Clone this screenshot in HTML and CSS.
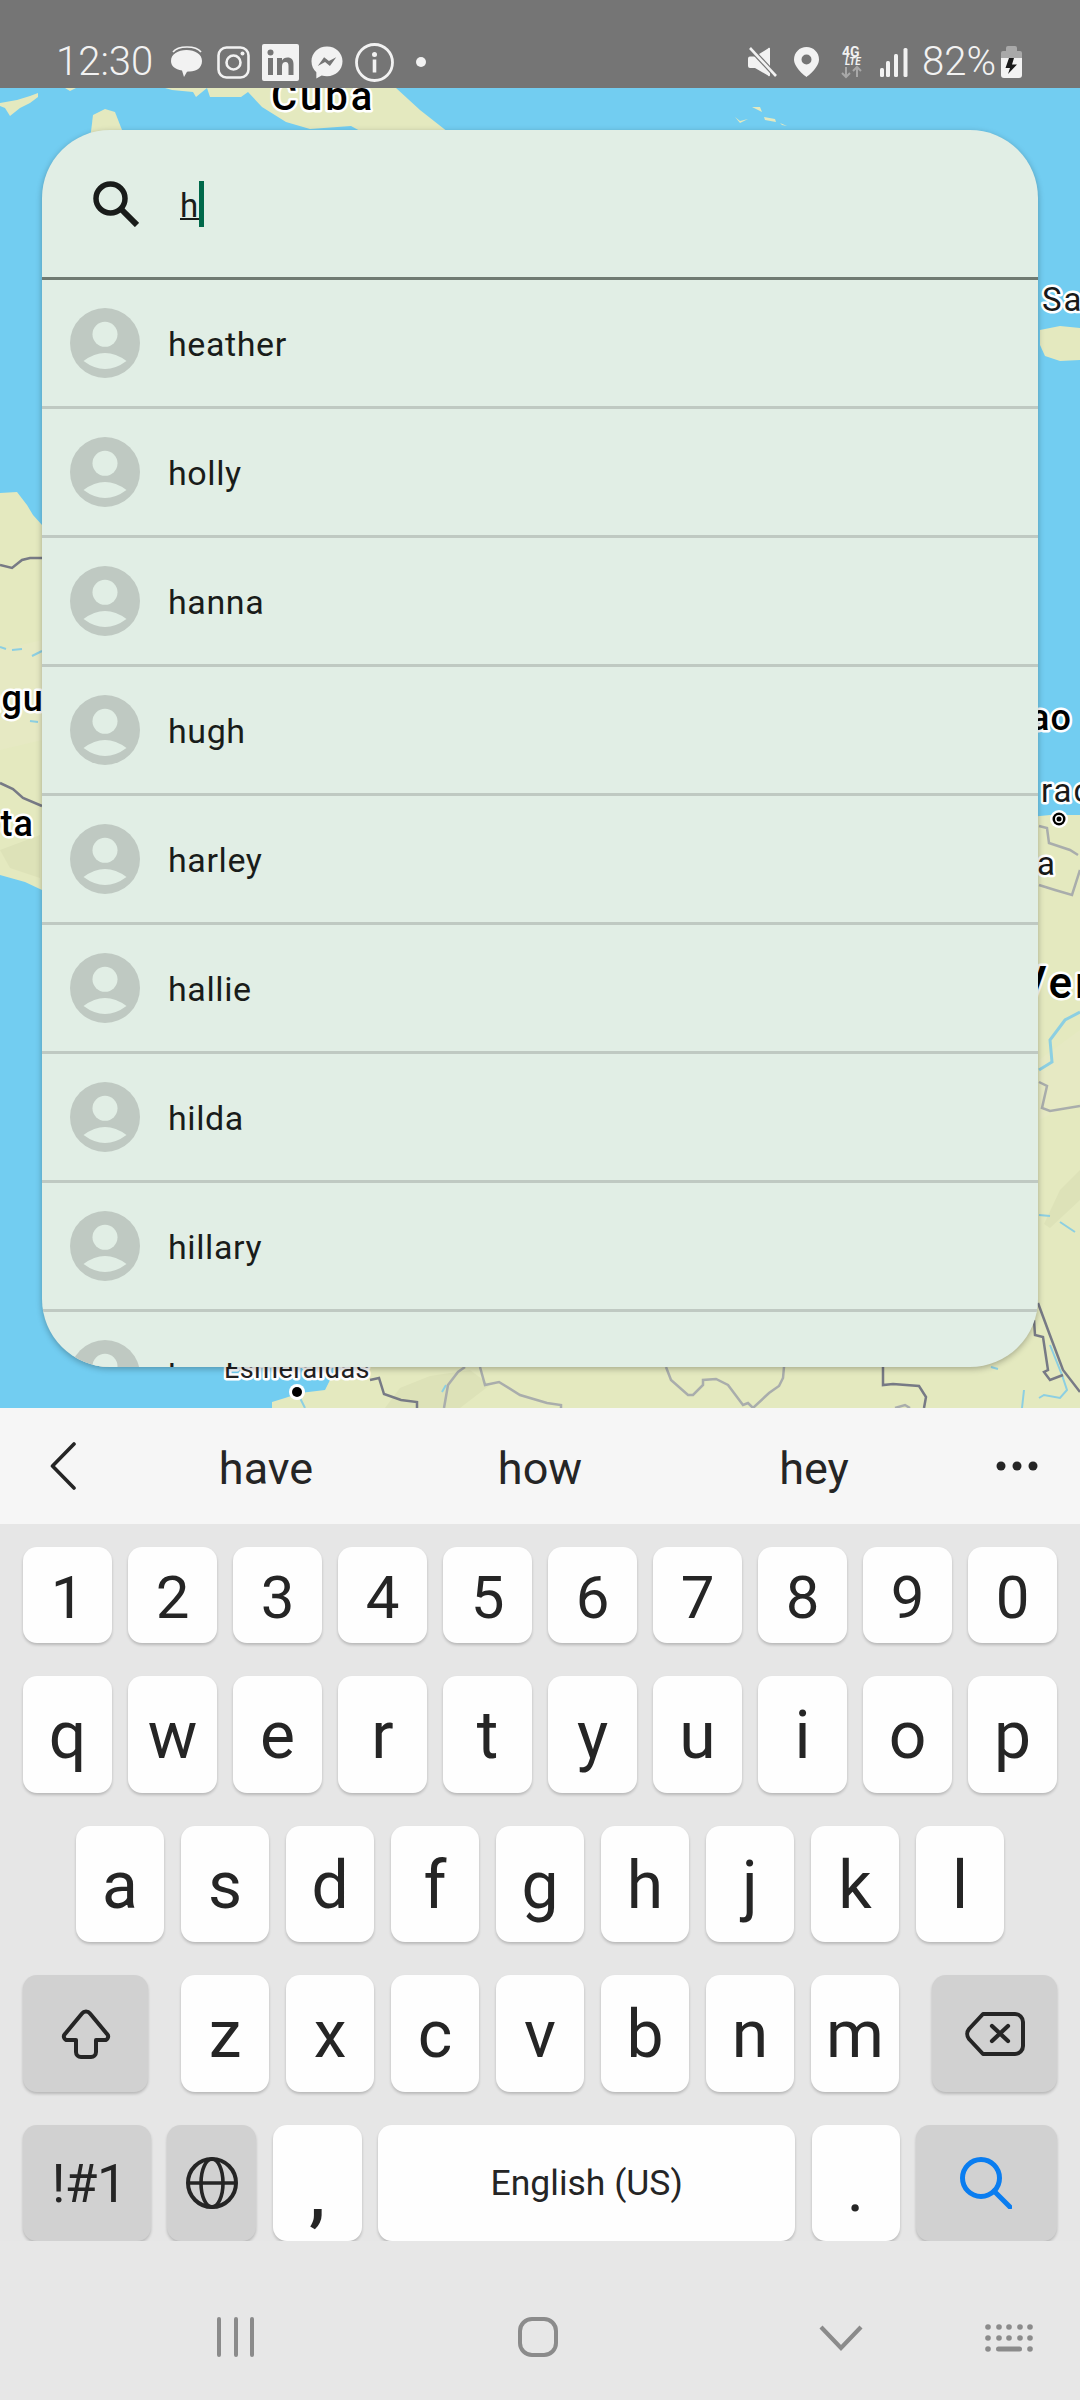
FILE: index.html
```html
<!DOCTYPE html>
<html lang="en">
<head>
<meta charset="utf-8">
<title>Search contacts</title>
<link rel="stylesheet" href="styles.css">
</head>
<body>
<svg class="defs" width="0" height="0" aria-hidden="true">
  <symbol id="avatar" viewBox="0 0 70 70">
    <circle cx="35" cy="35" r="35" fill="#bfc9c2"/>
    <circle cx="35" cy="26.3" r="12.5" fill="#e1eee5"/>
    <path d="M13.5 53Q35 37 56.5 53Q35 69 13.5 53Z" fill="#e1eee5"/>
  </symbol>
</svg>
<div class="phone">
  <header class="status">
    <div class="status-left">
      <span class="clock">12:30</span>
      <div class="status-icons">
        <svg width="34" height="32" viewBox="0 0 34 32"><path d="M2 6C5 2 10 1 16 1c6 0 11 1 14 5" fill="none" stroke="#f2f2f2" stroke-width="1.6"/><path d="M0 15C0 8 7 4 15.500 4S31 8 31 15s-6 10.500-12 10.500c-1 0-2 0-3 .2L13 31l-2-6.500C4 23.500 0 20 0 15Z" fill="#f2f2f2"/></svg>
        <svg width="33" height="33" viewBox="0 0 33 33"><rect x="1.500" y="1.500" width="30" height="30" rx="8" fill="none" stroke="#f2f2f2" stroke-width="2.600"/><circle cx="16.500" cy="16.500" r="7" fill="none" stroke="#f2f2f2" stroke-width="2.600"/><circle cx="25.500" cy="7.500" r="2" fill="#f2f2f2"/></svg>
        <svg width="37" height="37" viewBox="0 0 37 37"><rect width="37" height="37" rx="2" fill="#f2f2f2"/><rect x="6" y="14" width="5" height="17" fill="#757575"/><circle cx="8.500" cy="8.500" r="3" fill="#757575"/><path d="M15 14h5v2.500c1-2 3-3 5.500-3 4 0 6 2.500 6 7V31h-5v-9c0-2.500-.8-4-2.800-4-2.300 0-3.700 1.500-3.700 4.200V31h-5Z" fill="#757575"/></svg>
        <svg width="32" height="33" viewBox="0 0 33 34"><path d="M16.500.5C7.500.5.500 7 .5 15.800c0 4.600 1.900 8.600 5 11.300V33.500l5.500-3c1.700.5 3.500.7 5.500.7 9 0 16-6.600 16-15.400S25.500.5 16.500.5Z" fill="#f2f2f2"/><path d="M7 20.500 13.500 11.500 18.500 15.500 26 11.500 19.500 20.500 14.500 16.500Z" fill="#757575"/></svg>
        <svg width="39" height="39" viewBox="0 0 39 39"><circle cx="19.500" cy="19.500" r="18" fill="none" stroke="#f2f2f2" stroke-width="2.800"/><circle cx="19.500" cy="11.500" r="2.500" fill="#f2f2f2"/><rect x="17.700" y="16.500" width="3.600" height="13" fill="#f2f2f2"/></svg>
        <svg width="20" height="12" viewBox="0 0 20 12"><circle cx="15" cy="6" r="5" fill="#f2f2f2"/></svg>
      </div>
    </div>
    <div class="status-right">
      <div class="status-net">
        <svg width="29" height="30" viewBox="0 0 29 30"><path d="M0 11.500a2 2 0 0 1 2-2h5L20 1.500a1 1 0 0 1 2 .5V28a1 1 0 0 1-2 .5L7 21H2a2 2 0 0 1-2-2Z" fill="#f2f2f2"/><path d="M2 1 28 29" stroke="#757575" stroke-width="5"/><path d="M2 1 28 29" stroke="#f2f2f2" stroke-width="2.600"/></svg>
        <svg width="30" height="30" viewBox="0 0 30 30"><path fill-rule="evenodd" d="M12.500 0C5.500 0 0 5.500 0 12.500 0 21 12.500 30 12.500 30S25 21 25 12.500C25 5.500 19.500 0 12.500 0Zm0 7.500a5 5 0 1 1 0 10 5 5 0 0 1 0-10Z" fill="#f2f2f2"/></svg>
        <svg width="22" height="33" viewBox="0 0 22 33"><text class="net-top" x="1" y="10.500">4G</text><text class="net-lte" x="4" y="18.500">LTE</text><path d="M5 21V31M1 27l4 4 4-4M16 31V21M12 25l4-4 4 4" fill="none" stroke="#a8a8a8" stroke-width="2"/></svg>
        <svg width="28" height="30" viewBox="0 0 28 30"><rect x="0" y="21" width="4" height="9" rx="1.500" fill="#f2f2f2"/><rect x="6" y="14" width="4" height="16" rx="1.500" fill="#f2f2f2"/><rect x="14" y="7" width="4" height="23" rx="1.500" fill="#f2f2f2"/><rect x="23.500" y="1" width="4" height="29" rx="1.500" fill="#f2f2f2"/></svg>
      </div>
      <div class="status-batt">
        <span class="clock">82%</span>
        <svg width="21" height="32" viewBox="0 0 21 32"><path d="M5 5V2a2 2 0 0 1 2-2h7a2 2 0 0 1 2 2v3h3a2 2 0 0 1 2 2v5H0V7a2 2 0 0 1 2-2Z" fill="#a9a9a9"/><path d="M0 12h21v17a3 3 0 0 1-3 3H3a3 3 0 0 1-3-3Z" fill="#f2f2f2"/><path d="M13 12H8L4.500 22H9L7 28 16 18.500H11Z" fill="#191919"/></svg>
      </div>
    </div>
  </header>

  <main class="map">
    <svg class="map-art" width="1080" height="1320" viewBox="0 88 1080 1320">
      <rect class="water" x="0" y="88" width="1080" height="1320"/>
      <path class="land" d="M0 103 17 100 30 96 38 93 38 97 30 103 20 108 10 116 5 108 0 106ZM65 88H76L70 91Z"/>
      <path class="land" d="M93 115 105 109 115 112 122 130 124 140H90Z"/>
      <path class="land" d="M165 88 172 90 193 92 196 97 207 88 210 97 241 97 248 92 262 107 286 122 310 129 351 126 362 132H448L420 110 396 88Z"/>
      <path class="land" d="M735 117 740 121 748 119 744 121 740 123ZM752 107 760 107 762 112ZM764 117 775 119 776 122 765 120ZM780 123 787 126 782 125Z"/>
      <path class="land" d="M1040 330 1060 326 1080 328V360L1060 361 1045 356 1040 345Z"/>
      <path class="land" d="M0 493 17 492 27 505 33 515 42 525V890L25 882 0 875Z"/>
      <path class="land" d="M1000 1300 1020 818 1050 815 1080 815V1408H1000Z"/>
      <path class="land" d="M272 1408 272 1402 285 1398 300 1393 325 1390 330 1380 375 1360H1030V1408Z"/>
      <path class="relief" d="M385 1408 400 1388 430 1376 470 1370 490 1385 460 1408ZM1060 1190 1080 1170V1200L1050 1228 1044 1224ZM0 850 40 835V878L10 868Z"/>
      <path class="relief soft" d="M0 650 42 640V740L0 750ZM1039 1060 1080 1030V1100L1039 1120Z"/>
      <path class="river" d="M0 647 6 649M12 650 22 649M32 656 42 651M991 1367 998 1369M1024 1390 1022 1408M1039 1398 1044 1395 1060 1398 1067 1390 1062 1375 1050 1345M446 1385 442 1392M300 1398 305 1408M30 721 38 722"/>
      <path class="river wide" d="M1039 1070 1052 1062 1050 1040 1065 1020 1080 1012"/>
      <path class="river" d="M1039 1215 1050 1216M1060 1222 1075 1232"/>
      <path class="border" d="M0 565 12 568 22 560 30 558 42 558M0 783 13 789 23 798 42 806M370 1380 379 1378 384 1394 401 1400 417 1402 417 1408M883 1367V1385L893 1384 919 1386 926 1397 924 1408M1038 1303 1048 1330 1063 1370 1080 1392M1034 1320 1035 1335 1043 1337 1048 1370 1044 1372 1050 1380 1063 1375"/>
      <path class="border light" d="M444 1408 448 1385 458 1372 465 1367M480 1367 485 1385 499 1382 520 1395 547 1403 561 1405V1408M666 1367 671 1380 688 1395 693 1395 703 1385V1380L716 1379 728 1385 743 1405 748 1403 753 1408 769 1393 779 1386 783 1378 784 1367M895 1408 905 1405 910 1408M1039 826 1047 828 1049 843 1070 850 1078 855M1080 870 1072 895 1055 890 1039 885M1039 1082 1047 1086 1042 1108 1050 1111 1080 1106"/>
      <circle class="halo-dot" cx="297" cy="1392" r="8"/>
      <circle class="dot" cx="297" cy="1392" r="5"/>
      <circle class="halo-dot" cx="1059" cy="819" r="9"/>
      <circle class="dot" cx="1059" cy="819" r="6.500"/>
      <circle class="halo-dot" cx="1059" cy="819" r="4"/>
      <circle class="dot" cx="1059" cy="819" r="2.500"/>
      <text class="label strong big" x="271" y="110">Cuba</text>
      <text class="label" x="1042" y="311">Sa</text>
      <text class="label strong mid" x="-19" y="711">agu</text>
      <text class="label strong mid" x="-19" y="836">sta</text>
      <text class="label strong mid" x="1030" y="730">ao</text>
      <text class="label" x="1041" y="802">rac</text>
      <text class="label" x="1037" y="875">a</text>
      <text class="label strong big wider" x="1018" y="998">Ven</text>
      <text class="label small" x="224" y="1378">Esmeraldas</text>
    </svg>

    <section class="search-card">
      <div class="search-head">
        <svg class="search-glyph" width="46" height="46" viewBox="0 0 46 46"><circle cx="17.500" cy="17.500" r="14.500" fill="none" stroke="#191c1a" stroke-width="5.500"/><path d="M27.500 27.500 44 44" stroke="#191c1a" stroke-width="6"/></svg>
        <span class="query">h</span><span class="caret"></span>
      </div>
      <ul class="results">
        <li class="result"><svg class="avatar"><use href="#avatar"/></svg><span>heather</span></li>
        <li class="result"><svg class="avatar"><use href="#avatar"/></svg><span>holly</span></li>
        <li class="result"><svg class="avatar"><use href="#avatar"/></svg><span>hanna</span></li>
        <li class="result"><svg class="avatar"><use href="#avatar"/></svg><span>hugh</span></li>
        <li class="result"><svg class="avatar"><use href="#avatar"/></svg><span>harley</span></li>
        <li class="result"><svg class="avatar"><use href="#avatar"/></svg><span>hallie</span></li>
        <li class="result"><svg class="avatar"><use href="#avatar"/></svg><span>hilda</span></li>
        <li class="result"><svg class="avatar"><use href="#avatar"/></svg><span>hillary</span></li>
        <li class="result"><svg class="avatar"><use href="#avatar"/></svg><span>hank</span></li>
      </ul>
    </section>
  </main>

  <div class="suggestions">
    <svg class="sug-back" width="26" height="50" viewBox="0 0 26 50"><path d="M24 3 2.500 25 24 47" fill="none" stroke="#252525" stroke-width="3.600" stroke-linecap="round" stroke-linejoin="round"/></svg>
    <span class="word">have</span>
    <span class="word">how</span>
    <span class="word">hey</span>
    <svg class="sug-more" width="42" height="10" viewBox="0 0 42 10"><circle cx="5" cy="5" r="4.500" fill="#252525"/><circle cx="21" cy="5" r="4.500" fill="#252525"/><circle cx="37" cy="5" r="4.500" fill="#252525"/></svg>
  </div>

  <div class="keyboard">
    <div class="key-row digits">
      <span class="key">1</span><span class="key">2</span><span class="key">3</span><span class="key">4</span><span class="key">5</span><span class="key">6</span><span class="key">7</span><span class="key">8</span><span class="key">9</span><span class="key">0</span>
    </div>
    <div class="key-row tall">
      <span class="key">q</span><span class="key">w</span><span class="key">e</span><span class="key">r</span><span class="key">t</span><span class="key">y</span><span class="key">u</span><span class="key">i</span><span class="key">o</span><span class="key">p</span>
    </div>
    <div class="key-row mid-row">
      <span class="key">a</span><span class="key">s</span><span class="key">d</span><span class="key">f</span><span class="key">g</span><span class="key">h</span><span class="key">j</span><span class="key">k</span><span class="key">l</span>
    </div>
    <div class="key-row tall split">
      <span class="key func wide">
        <svg width="50" height="50" viewBox="0 0 50 50"><path d="M21 4.500a5 5 0 0 1 8 0L46 25a3.500 3.500 0 0 1-3 6H35V43a5 5 0 0 1-5 5H20a5 5 0 0 1-5-5V31H7a3.500 3.500 0 0 1-3-6Z" fill="none" stroke="#252525" stroke-width="4" stroke-linejoin="round"/></svg>
      </span>
      <div class="letters">
        <span class="key">z</span><span class="key">x</span><span class="key">c</span><span class="key">v</span><span class="key">b</span><span class="key">n</span><span class="key">m</span>
      </div>
      <span class="key func wide">
        <svg width="60" height="46" viewBox="0 0 60 46"><path d="M18 3H50a8 8 0 0 1 8 8V35a8 8 0 0 1-8 8H18L4 28a8 8 0 0 1 0-10Z" fill="none" stroke="#252525" stroke-width="4" stroke-linejoin="round"/><path d="M27 15 43 30M43 15 27 30" stroke="#252525" stroke-width="4.200" stroke-linecap="round"/></svg>
      </span>
    </div>
    <div class="key-row bottom">
      <span class="key func symbols">!#1</span>
      <span class="key func">
        <svg width="54" height="54" viewBox="0 0 54 54"><circle cx="27" cy="27" r="24" fill="none" stroke="#252525" stroke-width="4"/><ellipse cx="27" cy="27" rx="11" ry="24" fill="none" stroke="#252525" stroke-width="3.600"/><path d="M3 27H51" stroke="#252525" stroke-width="3.600"/></svg>
      </span>
      <span class="key mark comma">,</span>
      <span class="key space">English (US)</span>
      <span class="key mark stop">.</span>
      <span class="key func go">
        <svg width="52" height="52" viewBox="0 0 52 52"><circle cx="21" cy="21" r="18.500" fill="none" stroke="#0a7df0" stroke-width="5"/><path d="M34 34 50 50" stroke="#0a7df0" stroke-width="5" stroke-linecap="round"/></svg>
      </span>
    </div>
  </div>

  <nav class="navbar">
    <svg class="nav-recents" width="40" height="40" viewBox="0 0 40 40"><path d="M3 2V38M20 2V38M36 2V38" stroke="#8b8b8b" stroke-width="4" stroke-linecap="round"/></svg>
    <svg class="nav-home" width="40" height="40" viewBox="0 0 40 40"><rect x="2" y="2" width="36" height="36" rx="12" fill="none" stroke="#8b8b8b" stroke-width="4"/></svg>
    <svg class="nav-back" width="44" height="40" viewBox="0 0 44 40"><path d="M2 10 22 31 42 10" fill="none" stroke="#8b8b8b" stroke-width="4.200"/></svg>
    <svg class="nav-kbd" width="48" height="40" viewBox="0 0 48 40"><g fill="#8b8b8b"><circle cx="3" cy="10" r="2.800"/><circle cx="14" cy="10" r="2.800"/><circle cx="24" cy="10" r="2.800"/><circle cx="35" cy="10" r="2.800"/><circle cx="45" cy="10" r="2.800"/><circle cx="3" cy="21" r="2.800"/><circle cx="14" cy="21" r="2.800"/><circle cx="24" cy="21" r="2.800"/><circle cx="35" cy="21" r="2.800"/><circle cx="45" cy="21" r="2.800"/><circle cx="3" cy="32" r="2.800"/><rect x="11" y="29.500" width="26" height="5" rx="2.500"/><circle cx="45" cy="32" r="2.800"/></g></svg>
  </nav>
</div>
</body>
</html>
```

FILE: styles.css
```css
* { box-sizing: border-box; }

html, body {
  margin: 0;
  padding: 0;
  background: #e6e6e6;
}

.defs { position: absolute; }

.phone {
  width: 1080px;
  height: 2400px;
  overflow: hidden;
  display: flex;
  flex-direction: column;
  font-family: Roboto, "Liberation Sans", sans-serif;
}

/* status bar */
.status {
  flex: none;
  height: 88px;
  padding: 36px 58px 0 56px;
  background: #757575;
  color: #f2f2f2;
  display: flex;
  justify-content: space-between;
}

.status-left, .status-right, .status-icons, .status-net, .status-batt {
  display: flex;
  align-items: center;
  height: 52px;
}

.status-left { gap: 18px; }
.status-icons { gap: 12px; }
.status-right { gap: 14px; }
.status-net { gap: 17px; }
.status-batt { gap: 5px; }

.clock {
  font-size: 40px;
  font-weight: 300;
  line-height: 52px;
}

.net-top {
  font: 700 14px Roboto, sans-serif;
  fill: #f2f2f2;
}

.net-lte {
  font: italic 700 10px Roboto, sans-serif;
  fill: #f2f2f2;
}

/* map */
.map {
  position: relative;
  flex: none;
  height: 1320px;
  padding: 42px 42px 41px;
  overflow: hidden;
}

.map-art {
  position: absolute;
  left: 0;
  top: 0;
}

.water { fill: #72cdf1; }
.land { fill: #e4e9bf; }
.relief { fill: #dde2b8; }
.relief.soft { fill: #e6e9c3; }
.river { fill: none; stroke: #8ccfe2; stroke-width: 2; }
.river.wide { stroke-width: 3; }
.border { fill: none; stroke: #777a85; stroke-width: 2.500; }
.border.light { stroke: #a9adac; }
.dot { fill: #000; }
.halo-dot { fill: #fff; }

.label {
  font-family: Roboto, sans-serif;
  font-size: 33px;
  fill: #191919;
  stroke: #fff;
  stroke-width: 5px;
  stroke-linejoin: round;
  paint-order: stroke;
  letter-spacing: 2px;
}

.label.strong { font-weight: 500; fill: #000; }
.label.big { font-size: 40px; letter-spacing: 3px; }
.label.wider { font-size: 44px; }
.label.mid { font-size: 36px; letter-spacing: 1px; }
.label.small { font-size: 27px; letter-spacing: 0.5px; fill: #222; }

/* search card */
.search-card {
  position: relative;
  height: 100%;
  display: flex;
  flex-direction: column;
  background: #e1eee5;
  border-radius: 68px;
  overflow: hidden;
  box-shadow: 0 2px 6px rgba(0, 0, 0, 0.28);
}

.search-head {
  flex: none;
  height: 150px;
  padding: 1px 0 0 51px;
  display: flex;
  align-items: center;
  border-bottom: 3px solid #6f7a72;
}

.search-glyph { margin-right: 41px; }

.query {
  padding-top: 2px;
  font-size: 33px;
  letter-spacing: 0.8px;
  color: #191c1a;
  text-decoration: underline;
  text-decoration-thickness: 2px;
}

.caret {
  flex: none;
  width: 5px;
  height: 46px;
  background: #00694a;
}

.results {
  list-style: none;
  margin: 0;
  padding: 0;
}

.result {
  height: 129px;
  padding: 0 0 0 28px;
  display: flex;
  align-items: center;
  gap: 28px;
  border-bottom: 3px solid #bfc9c2;
  font-size: 34px;
  letter-spacing: 0.6px;
  color: #191c1a;
}

.result span { padding-top: 2px; }

.avatar {
  width: 70px;
  height: 70px;
  flex: none;
}

/* suggestion strip */
.suggestions {
  flex: none;
  height: 116px;
  background: #f6f6f6;
  display: grid;
  grid-template-columns: 129px repeat(3, 274px) 1fr;
  align-items: center;
  font-size: 45px;
  color: #252525;
}

.sug-back { margin-left: 50px; }
.word { text-align: center; padding-top: 4px; }
.sug-more { margin-left: 45px; }

/* keyboard */
.keyboard {
  flex: none;
  height: 717px;
  padding: 23px 23px 0;
  display: flex;
  flex-direction: column;
  gap: 33px;
  background: #e6e6e6;
}

.key-row {
  height: 116px;
  display: flex;
  gap: 16px;
  font-size: 66px;
  color: #252525;
}

.key-row.digits { height: 96px; font-size: 60px; }
.key-row.tall { height: 117px; }
.key-row.mid-row { gap: 17px; justify-content: center; }
.key-row.split { justify-content: space-between; gap: 0; }
.key-row.bottom { gap: 16.4px; }

.letters { display: flex; gap: 17px; }

.key {
  flex: 1 1 0;
  min-width: 0;
  padding-top: 3px;
  display: flex;
  align-items: center;
  justify-content: center;
  background: #fefefe;
  border-radius: 14px;
  box-shadow: 0 2px 3px rgba(0, 0, 0, 0.2);
  line-height: 1;
}

.digits .key { padding-top: 5px; }
.mid-row .key, .letters .key { flex: none; width: 88px; }

.key.func { background: #d1d1d1; padding-top: 0; flex: none; width: 89px; }
.key.wide { width: 125px; }
.key.symbols { width: 128px; padding: 3px 0 0 4px; font-size: 53px; letter-spacing: -0.5px; }
.key.go { width: 141px; padding-top: 0; }
.key.mark { flex: none; }
.key.comma { width: 89px; padding-top: 17px; font-size: 74px; font-weight: 500; }
.key.stop { width: 88px; padding-top: 12px; }
.key.space { flex: none; width: 417px; padding-top: 2px; font-size: 35.500px; }

/* navigation bar */
.navbar {
  flex: none;
  height: 159px;
  padding: 76px 0 0 216px;
  display: flex;
  align-items: flex-start;
  background: #e7e7e7;
}

.nav-home { margin-left: 262px; }
.nav-back { margin-left: 261px; }
.nav-kbd { margin-left: 122px; }
```
